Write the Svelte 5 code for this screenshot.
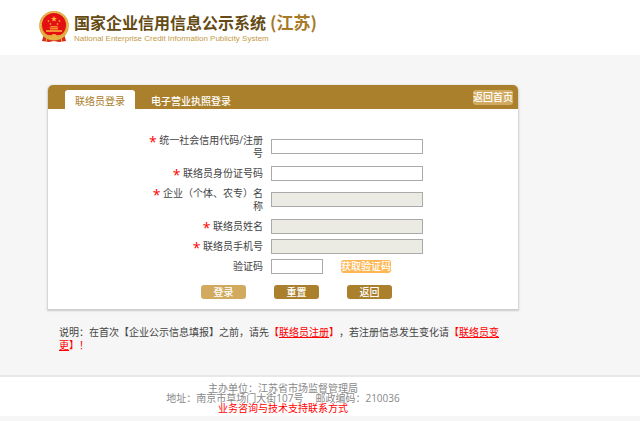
<script lang="ts">
  type Field = {
    id: string;
    label: string;
    disabled?: boolean;
  };

  const fields: Field[] = [
    { id: 'credit-code', label: '统一社会信用代码/注册号' },
    { id: 'id-card', label: '联络员身份证号码' },
    { id: 'company', label: '企业（个体、农专）名称', disabled: true },
    { id: 'contact-name', label: '联络员姓名', disabled: true },
    { id: 'contact-phone', label: '联络员手机号', disabled: true }
  ];

  const tabs = ['联络员登录', '电子营业执照登录'];

  let activeTab = $state(0);
  let values = $state<Record<string, string>>({});
  let code = $state('');

  function reset() {
    values = {};
    code = '';
  }
</script>

<header class="site-header">
  <svg class="emblem" viewBox="0 0 30 32" aria-hidden="true">
    <path d="M5 23 L3 30 L10 31 L15 30 L20 31 L27 30 L25 23 Z" fill="#d9281c" />
    <circle cx="15" cy="14.8" r="14.8" fill="#dca53a" />
    <circle cx="15" cy="14.8" r="13.4" fill="none" stroke="#f3cd68" stroke-width="1" stroke-dasharray="2 1" />
    <circle cx="15" cy="14" r="12" fill="#e30f12" />
    <path d="M15 5 l.8 2 2.1.1 -1.6 1.4 .5 2.1 -1.8-1.2 -1.8 1.2 .5-2.1 -1.6-1.4 2.1-.1z" fill="#ffb43a" />
    <g fill="#f98f30">
      <circle cx="9.5" cy="10" r="0.9" />
      <circle cx="20.5" cy="10" r="0.9" />
      <circle cx="11.5" cy="13" r="0.9" />
      <circle cx="18.5" cy="13" r="0.9" />
      <path d="M10 16.5 L12 15 H18 L20 16.5 Z M11 17 H19 V18.5 H11 Z M7 19 H23 V21 H7 Z" />
    </g>
    <path d="M3 22 Q15 27 27 22 L25 26 Q15 29 5 26 Z" fill="#e2ae42" />
    <circle cx="15" cy="26" r="3" fill="#e9b13c" />
    <path d="M8 27 L7 31 M22 27 L23 31" stroke="#f0bd45" stroke-width="1" />
  </svg>
  <div>
    <h1>国家企业信用信息公示系统<span>(江苏)</span></h1>
    <p class="subtitle">National Enterprise Credit Information Publicity System</p>
  </div>
</header>

<main>
  <section class="panel">
    <div class="tab-bar">
      {#each tabs as tab, i}
        <button type="button" class="tab" class:active={activeTab === i} onclick={() => (activeTab = i)}>{tab}</button>
      {/each}
      <a class="home" href="#home">返回首页</a>
    </div>

    <form onsubmit={(event) => event.preventDefault()}>
      {#each fields as field}
        <div class="row">
          <label for={field.id}><span class="star">*</span> {field.label}</label>
          <input id={field.id} type="text" disabled={field.disabled} bind:value={values[field.id]} />
        </div>
      {/each}
      <div class="row">
        <label for="code">验证码</label>
        <input id="code" class="short" type="text" bind:value={code} />
        <button type="button" class="get-code">获取验证码</button>
      </div>
      <div class="actions">
        <button type="submit" class="login">登录</button>
        <button type="button" onclick={reset}>重置</button>
        <button type="button">返回</button>
      </div>
    </form>
  </section>

  <p class="notice">
    说明：在首次【企业公示信息填报】之前，请先<span>【<a href="#register">联络员注册</a>】</span>，若注册信息发生变化请<span>【<a href="#change">联络员变更</a>】！</span>
  </p>
</main>

<footer>
  <p>主办单位：江苏省市场监督管理局</p>
  <p class="address"><span>地址：南京市草场门大街107号</span><span>邮政编码：210036</span></p>
  <p><a href="#support">业务咨询与技术支持联系方式</a></p>
</footer>

<style>
  :global(body) {
    background: #f6f6f6;
    color: #444;
    font-family: 'Open Sans', 'Noto Sans CJK SC', sans-serif;
    font-size: 10px;
    line-height: 13px;
    text-spacing-trim: space-all;
  }

  h1,
  p {
    margin: 0;
  }

  button,
  input {
    box-sizing: border-box;
    padding: 0;
    font: inherit;
  }

  button {
    border: none;
    cursor: pointer;
  }

  .site-header {
    display: flex;
    align-items: flex-start;
    gap: 5px;
    padding: 11px 39px 12px;
    background: #fff;
  }

  .emblem {
    flex: none;
    width: 30px;
    height: 32px;
  }

  h1 {
    font-family: 'Noto Sans CJK SC', sans-serif;
    font-size: 16px;
    line-height: 22px;
    font-weight: 700;
    color: #654b13;
    white-space: nowrap;
  }

  h1 span {
    margin-left: 4px;
    font-size: 17px;
    color: #a67a26;
  }

  .subtitle {
    padding-top: 2px;
    font-family: 'Liberation Sans', sans-serif;
    font-size: 8px;
    line-height: 8px;
    color: #c39a45;
  }

  main {
    padding: 30px 122px 23px 48px;
  }

  .panel {
    background: #fff;
    border-radius: 5px 5px 0 0;
    box-shadow: 0 1px 2px 1px #ccc;
  }

  .tab-bar {
    display: flex;
    align-items: flex-end;
    height: 24px;
    padding: 0 5px 0 17px;
    background: #aa802c;
    border-radius: 5px 5px 0 0;
  }

  .tab {
    height: 19px;
    padding: 4px 10px 0;
    border-radius: 3px 3px 0 0;
    background: none;
    color: #fff;
    font-weight: 500;
  }

  .tab:first-child {
    margin-right: 6px;
  }

  .tab.active {
    background: #fff;
    color: #aa802c;
    font-weight: 400;
  }

  .home {
    align-self: center;
    margin-left: auto;
    border-radius: 3px;
    background: #d1aa5f;
    color: #fff;
    font-weight: 500;
    line-height: 15px;
    text-decoration: none;
  }

  form {
    padding: 21px 0 10px;
  }

  .row {
    display: flex;
    align-items: center;
    min-height: 20px;
    padding-left: 95px;
  }

  label {
    flex: none;
    width: 120px;
    margin-right: 8px;
    padding: 4px 0 3px;
    text-align: right;
  }

  .star {
    color: #f00;
    font-size: 14px;
    line-height: 10px;
    vertical-align: -3px;
  }

  input {
    width: 152px;
    height: 15px;
    border: 1px solid #aaa;
    background: #fff;
  }

  input:disabled {
    background: #ebebe4;
  }

  input.short {
    width: 52px;
  }

  .get-code {
    margin-left: 18px;
    border-radius: 3px;
    background: #ffb653;
    color: #fff;
    font-weight: 500;
  }

  .actions {
    display: flex;
    gap: 28px;
    padding: 9px 0 0 153px;
  }

  .actions button {
    width: 45px;
    height: 14px;
    border-radius: 3px;
    background: #aa802c;
    color: #fff;
    font-weight: 500;
  }

  .actions .login {
    background: #d1aa5f;
  }

  .notice {
    padding: 17px 10px 0 11px;
  }

  .notice span,
  .notice a,
  footer a {
    color: #f00;
  }

  footer {
    padding: 6px 74px 3px 0;
    border-top: 2px solid #e8e8e8;
    background: #fff;
    color: #888;
    line-height: 10px;
    text-align: center;
  }

  footer a {
    text-decoration: none;
  }

  .address {
    display: flex;
    justify-content: center;
    gap: 12px;
  }
</style>
